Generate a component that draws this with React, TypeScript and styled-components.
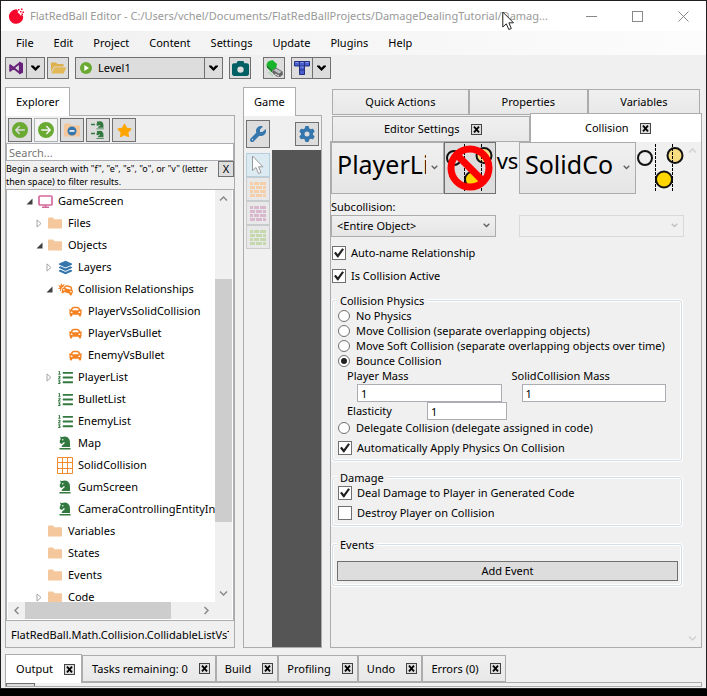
import React from "react";
import styled, { createGlobalStyle, css } from "styled-components";
import {
  FaWrench,
  FaGear,
  FaStar,
  FaLayerGroup,
  FaCircleArrowLeft,
  FaCircleArrowRight,
  FaCamera,
} from "react-icons/fa6";
import { FaCar, FaCarCrash, FaListOl } from "react-icons/fa";

const GlobalStyle = createGlobalStyle`
  *, *::before, *::after { box-sizing: border-box; }
  body { margin: 0; background: #000; }
  body, button, input, select {
    font-family: "Noto Sans", "Open Sans", sans-serif;
    font-size: 11px;
    line-height: 16px;
    color: #000;
  }
  button { padding: 0; margin: 0; }
`;

/* ---------- window frame ---------- */

const Screen = styled.div`
  height: 100vh;
  padding-bottom: 7px;
  background: #000;
`;

const AppWindow = styled.div`
  height: 100%;
  display: flex;
  flex-direction: column;
  background: #f0f0f0;
  border: 1px solid #231f20;
`;

const TitleBar = styled.header`
  flex: none;
  height: 30px;
  display: flex;
  align-items: center;
  background: #fff;
  padding-left: 7px;
`;

const TitleText = styled.h1`
  flex: 1;
  min-width: 0;
  margin: 0 0 0 5px;
  font-size: 11px;
  font-weight: 400;
  color: #999;
  white-space: nowrap;
  overflow: hidden;
  text-overflow: ellipsis;
`;

const CaptionButtons = styled.div`
  display: flex;
  height: 100%;
`;

const CaptionButton = styled.button`
  width: 46px;
  border: 0;
  background: none;
  display: flex;
  align-items: center;
  justify-content: center;
`;

const Pointer = styled.svg`
  position: absolute;
  left: 502px;
  top: 11px;
  z-index: 5;
`;

const MenuBar = styled.nav`
  flex: none;
  height: 24px;
  display: flex;
  align-items: center;
  padding-left: 5px;
  background: linear-gradient(90deg, #f0f0f0, #fcfcfc);
`;

const MenuItem = styled.button`
  border: 0;
  background: none;
  padding: 0 10px;
`;

/* ---------- toolbar ---------- */

const Toolbar = styled.div`
  flex: none;
  display: flex;
  padding: 2px 4px 0;
  height: 32px;
  align-items: flex-start;
`;

const ToolGroup = styled.div<{ $before?: number }>`
  display: flex;
  margin-left: ${(p) => p.$before ?? 0}px;
`;

const ToolButton = styled.button<{ $width?: number }>`
  height: 22px;
  width: ${(p) => p.$width ?? 22}px;
  border: 1px solid #707070;
  background: #ddd;
  display: flex;
  align-items: center;
  justify-content: center;
  & + & { border-left: 0; }
`;

const LevelButton = styled(ToolButton)`
  justify-content: flex-start;
  gap: 6px;
  padding-left: 4px;
`;

/* ---------- shared panels, tabs ---------- */

const Workspace = styled.main`
  flex: 1;
  min-height: 0;
  display: grid;
  grid-template-columns: 230px 79px minmax(0, 1fr);
  gap: 8px;
  padding: 0 4px;
`;

const Column = styled.section`
  display: flex;
  flex-direction: column;
  min-height: 0;
  min-width: 0;
`;

const PanelTab = styled.button`
  flex: none;
  align-self: flex-start;
  height: 29px;
  margin-bottom: -1px;
  padding: 0 10px;
  border: 1px solid #acacac;
  border-bottom: 0;
  background: #fff;
  z-index: 1;
`;

const PanelBody = styled.div`
  flex: 1;
  min-height: 0;
  display: flex;
  flex-direction: column;
  border: 1px solid #acacac;
`;

const Tab = styled.div<{ $active?: boolean; $grow?: number; $closable?: boolean }>`
  display: flex;
  align-items: center;
  justify-content: center;
  gap: 11px;
  height: 26px;
  padding-left: ${(p) => (p.$closable ? 4 : 0)}px;
  border: 1px solid #acacac;
  background: linear-gradient(#f0f0f0, #e8e8e8);
  ${(p) => p.$grow && css`flex: ${p.$grow} 1 0;`}
  ${(p) => p.$active && css`
    height: 29px;
    background: #fff;
    border-bottom: 0;
  `}
`;

const TabLabel = styled.button`
  border: 0;
  background: none;
  white-space: nowrap;
`;

const CloseButton = styled.button`
  width: 11px;
  height: 11px;
  border: 1px solid #444;
  background: #ddd;
  display: flex;
  align-items: center;
  justify-content: center;
`;

/* ---------- explorer ---------- */

const ExplorerTools = styled.div`
  display: flex;
  gap: 2px;
  padding: 2px 2px 1px;
`;

const SquareButton = styled.button<{ $faded?: boolean; $height?: number }>`
  width: 24px;
  height: ${(p) => p.$height ?? 24}px;
  display: flex;
  align-items: center;
  justify-content: center;
  border: 1px solid ${(p) => (p.$faded ? "#adb2b5" : "#707070")};
  background: ${(p) => (p.$faded ? "#f4f4f4" : "#ddd")};
`;

const SearchInput = styled.input`
  height: 18px;
  padding: 0 2px;
  border: 1px solid #abadb3;
  background: #fff;
  &::placeholder { color: #767676; opacity: 1; }
`;

const Hint = styled.div`
  display: flex;
  align-items: flex-start;
  height: 28px;
`;

const HintText = styled.p`
  flex: 1;
  min-width: 0;
  margin: 0;
  font-size: 9px;
  line-height: 13px;
  padding-top: 1px;
  white-space: nowrap;
`;

const HintClose = styled.button`
  flex: none;
  width: 16px;
  height: 16px;
  border: 1px solid #707070;
  background: #ddd;
  line-height: 14px;
`;

const TreeFrame = styled.div`
  flex: 1;
  min-height: 0;
  display: grid;
  grid-template: minmax(0, 1fr) 17px / minmax(0, 1fr) 17px;
  border: 1px solid #abadb3;
  background: #fff;
  padding: 0 1px 1px;
`;

const Tree = styled.ul`
  margin: 0;
  padding: 0;
  list-style: none;
  overflow: hidden;
`;

const TreeRow = styled.li<{ $depth: number }>`
  display: flex;
  align-items: center;
  height: 22px;
  padding-left: ${(p) => 13 + p.$depth * 10}px;
  white-space: nowrap;
`;

const Caret = styled.span`
  flex: none;
  width: 16px;
  height: 16px;
  display: flex;
  align-items: center;
  justify-content: center;
`;

const TreeIcon = styled.span`
  flex: none;
  width: 16px;
  margin-right: 5px;
  display: flex;
  justify-content: center;
`;

const Scroll = styled.div<{ $row?: boolean }>`
  display: flex;
  flex-direction: ${(p) => (p.$row ? "row" : "column")};
  background: #f0f0f0;
`;

const ScrollArrow = styled.button`
  width: 17px;
  height: 17px;
  flex: none;
  border: 0;
  background: none;
  display: flex;
  align-items: center;
  justify-content: center;
`;

const Track = styled.div<{ $part: number; $thumb?: boolean }>`
  flex: ${(p) => p.$part} 1 0;
  background: ${(p) => (p.$thumb ? "#cdcdcd" : "transparent")};
`;

const StatusLine = styled.div`
  flex: none;
  height: 26px;
  padding-top: 6px;
  margin: 0 5px;
  white-space: nowrap;
  overflow: hidden;
`;

/* ---------- game panel ---------- */

const GameBar = styled.div`
  display: flex;
  justify-content: space-between;
  align-items: center;
  padding: 4px 2px 2px;
`;

const GameArea = styled.div`
  flex: 1;
  min-height: 0;
  display: flex;
`;

const GameTools = styled.div`
  width: 28px;
  display: flex;
  flex-direction: column;
  padding: 3px 2px;
`;

const GhostTool = styled.button<{ $selected?: boolean }>`
  width: 24px;
  height: 24px;
  display: flex;
  align-items: center;
  justify-content: center;
  border: 1px solid ${(p) => (p.$selected ? "#b5cfdc" : "#c8cccf")};
  background: ${(p) => (p.$selected ? "#dcebf2" : "#e8e8e8")};
`;

const GameView = styled.div`
  flex: 1;
  background: #555;
`;

/* ---------- collision panel ---------- */

const TabRow = styled.div`
  display: flex;
  align-items: flex-end;
  margin: 2px 2px 0;
`;

const TabRowFront = styled(TabRow)`
  margin: -2px 0 -1px 2px;
  z-index: 1;
`;

const PropertyBody = styled.div`
  flex: 1;
  min-height: 0;
  display: flex;
  border: 1px solid #acacac;
`;

const Form = styled.form`
  flex: 1;
  min-width: 0;
  overflow: hidden;
`;

const PairGrid = styled.div`
  display: grid;
  grid-template-columns: minmax(0, 113fr) 52px 23px minmax(0, 117fr) 48px;
`;

const VersusText = styled.span`
  font-size: 22px;
  line-height: 36px;
  text-align: center;
`;

const ComboWrap = styled.div<{ $span?: boolean }>`
  position: relative;
  ${(p) => p.$span && css`grid-column: span 2;`}
`;

const Combo = styled.select<{ $big?: boolean; $endPadding: number }>`
  appearance: none;
  display: block;
  width: 100%;
  height: ${(p) => (p.$big ? 52 : 22)}px;
  padding: 0 ${(p) => p.$endPadding}px ${(p) => (p.$big ? 8 : 0)}px 5px;
  border: 1px solid #acacac;
  border-radius: 0;
  background: linear-gradient(#f0f0f0, #e5e5e5);
  font-size: ${(p) => (p.$big ? 25 : 11)}px;
  line-height: ${(p) => (p.$big ? 40 : 20)}px;
  color: #000;
  opacity: 1;
  text-overflow: clip;
  &:disabled { border-color: #d9d9d9; background: #f0f0f0; }
`;

const ComboArrow = styled.svg`
  position: absolute;
  right: 6px;
  top: 50%;
  margin-top: -3px;
  pointer-events: none;
`;

const PictureButton = styled.button`
  border: 1px solid #707070;
  background: #ddd;
  display: flex;
  align-items: center;
  justify-content: center;
`;

const SubLabel = styled.label`
  display: block;
  margin-top: 5px;
`;

const CheckLabel = styled.label`
  display: flex;
  align-items: center;
  gap: 5px;
  height: 16px;
  white-space: nowrap;
`;

const CheckStack = styled.div<{ $top?: number; $gap?: number }>`
  display: flex;
  flex-direction: column;
  gap: ${(p) => p.$gap ?? 4}px;
  margin-top: ${(p) => p.$top ?? 0}px;
`;

const TopChecks = styled(CheckStack)`
  padding-left: 1px;
`;

const CheckBox = styled.input`
  appearance: none;
  flex: none;
  width: 14px;
  height: 14px;
  margin: 0;
  display: grid;
  place-items: center;
  border: 1px solid #707070;
  background: #fff;
  &:checked::after {
    content: "";
    width: 10px;
    height: 10px;
    background: #212121;
    clip-path: polygon(0 50%, 18% 38%, 38% 62%, 82% 2%, 100% 12%, 42% 96%, 34% 96%);
  }
`;

const Radio = styled.input`
  appearance: none;
  flex: none;
  width: 12px;
  height: 12px;
  margin: 0 2px 0 0;
  display: grid;
  place-items: center;
  border: 1px solid #707070;
  border-radius: 50%;
  background: #fff;
  &:checked::after {
    content: "";
    width: 6px;
    height: 6px;
    border-radius: 50%;
    background: #212121;
  }
`;

const RadioLabel = styled(CheckLabel)`
  height: 15px;
  gap: 4px;
`;

const Group = styled.fieldset<{ $top: number }>`
  margin: ${(p) => p.$top}px 2px 0 1px;
  padding: 0 3px 4px 4px;
  min-width: 0;
  border: 1px solid #d5dfe5;
  border-radius: 3px;
  box-shadow: 0 0 0 1px #fff, inset 0 0 0 1px #fff;
`;

const Legend = styled.legend`
  padding: 0 3px;
  line-height: 15px;
  background: #f0f0f0;
`;

const GroupContent = styled.div`
  padding-left: 1px;
`;

const MassGrid = styled.div`
  display: grid;
  grid-template-columns: repeat(2, minmax(0, 1fr));
  margin: 0 2px 0 9px;
`;

const MassField = styled.label`
  display: flex;
  flex-direction: column;
  white-space: nowrap;
`;

const NumberBox = styled.input<{ $inset?: boolean }>`
  width: auto;
  min-width: 0;
  height: 18px;
  margin: ${(p) => (p.$inset ? "0 10px" : "0")};
  padding: 0 3px;
  border: 1px solid #abadb3;
  background: #fff;
`;

const ElasticityField = styled.label`
  display: grid;
  grid-template-columns: 80px 80px;
  align-items: center;
  margin-left: 9px;
`;

const WideButton = styled.button`
  display: block;
  width: 100%;
  height: 20px;
  margin-top: 9px;
  border: 1px solid #707070;
  background: #ddd;
  line-height: 18px;
`;

/* ---------- bottom dock ---------- */

const Dock = styled.footer`
  flex: none;
  padding: 6px 4px 1px;
`;

const DockTabs = styled.div`
  display: flex;
  align-items: flex-end;
`;

const DockTab = styled(Tab)<{ $width: number }>`
  width: ${(p) => p.$width}px;
  height: ${(p) => (p.$active ? 29 : 27)}px;
  margin-bottom: ${(p) => (p.$active ? -1 : 0)}px;
  z-index: ${(p) => (p.$active ? 1 : 0)};
`;

const DockBody = styled.div`
  height: 5px;
  border: 1px solid #acacac;
  overflow: hidden;
`;

const DockButton = styled.button`
  display: block;
  width: 29px;
  height: 16px;
  border: 1px solid #707070;
  background: #ddd;
`;

/* ---------- drawings ---------- */

const Chevron = ({ dir = "down", color = "#8a8a8a" }: { dir?: "up" | "down" | "left" | "right"; color?: string }) => {
  const turn = { down: 0, left: 90, up: 180, right: 270 }[dir];
  return (
    <svg width="11" height="11" viewBox="0 0 11 11" aria-hidden="true">
      <path d="M2 3.500 5.500 7 9 3.500" fill="none" stroke={color} strokeWidth="1.500" transform={`rotate(${turn} 5.5 5.5)`} />
    </svg>
  );
};

const DropGlyph = () => (
  <svg width="9" height="7" viewBox="0 0 9 7" aria-hidden="true">
    <path d="M0 0.5H2.500L4.500 2.800 6.500 0.500H9V1.500L4.500 6 0 1.500Z" fill="#000" />
  </svg>
);

const CloseX = () => (
  <svg width="7" height="7" viewBox="0 0 7 7" aria-hidden="true">
    <path d="M1 .7 6 6.300M6 .7 1 6.300" stroke="#000" strokeWidth="1.800" />
  </svg>
);

const Logo = () => (
  <svg width="17" height="17" viewBox="0 0 17 17" aria-hidden="true">
    <path d="M7 1.500a7.200 7.200 0 1 0 8.300 7.500l-1-2-2 .5-1-2-1.500-.5L10 3 8.500 1.300Z" fill="#f5082b" />
    <path d="M10 1h1.500v1.500H10zM13 .5h1.500V2H13zM12 3h1.500v1.500H12zM14.500 3.500H16V5h-1.500zM13.500 5.500H15V7h-1.500z" fill="#f5082b" />
  </svg>
);

const VisualStudio = () => (
  <svg width="15" height="14" viewBox="0 0 15 14" aria-hidden="true">
    <path d="M1.200 4.200 10.800 12V2L1.200 9.800Z" fill="none" stroke="#68217a" strokeWidth="1.900" strokeLinejoin="round" />
    <path d="M10 0.500 14 2.200V11.800L10 13.500Z" fill="#68217a" />
  </svg>
);

const OpenFolder = () => (
  <svg width="17" height="14" viewBox="0 0 17 14" aria-hidden="true">
    <path d="M1 11V2.500Q1 1.500 2 1.500H6L7.500 3H13.500V5.500H4Z" fill="#dcb04a" />
    <path d="M4.500 6.300H16.500L13.500 12.500H1.300Z" fill="#e3b857" />
  </svg>
);

const PlayDisc = () => (
  <svg width="12" height="12" viewBox="0 0 12 12" aria-hidden="true">
    <circle cx="6" cy="6" r="6" fill="#6aa932" />
    <path d="M4.300 3 9 6 4.300 9Z" fill="#fff" />
  </svg>
);

const Eraser = () => (
  <svg width="19" height="19" viewBox="0 0 19 19" aria-hidden="true">
    <path d="M1.500 5.500 3 2.500 7.500 1 12 5 11 10 7.500 11Z" fill="#18b52c" />
    <path d="M1.500 5.500 7.500 11V14L2 8.500Z" fill="#0d7f1c" />
    <path d="M4 11 6 12.500M3 13 8 17" stroke="#8ed698" strokeWidth="1" />
    <path d="M7.500 11 11 8.500 17.500 12.500 18 15.500 15 18 11.500 17.500 7.500 14Z" fill="#666" />
    <path d="M8.500 11.300 11 9.500 16.500 12.800 14 14.800Z" fill="#bfc3c3" />
    <path d="M10 15 14 17" stroke="#e5e5e5" />
  </svg>
);

const BlockT = () => (
  <svg width="16" height="14" viewBox="0 0 16 14" aria-hidden="true">
    <path d="M.5.5H15.500V5H10.500V13.500H5.500V5H.5Z" fill="#4a5fd0" stroke="#25307c" />
    <path d="M5.500 1V5M10.500 1V5M5.500 5H10.500M5.500 9H10.500" stroke="#25307c" />
    <path d="M1.500 1.500H4.500M6.500 1.500H9.500M11.500 1.500H14.500M6.500 6H9.500" stroke="#8794ea" />
  </svg>
);

const Folder = () => (
  <svg width="14" height="12" viewBox="0 0 14 12" aria-hidden="true">
    <path d="M0 1.500Q0 .5 1 .5H5L6.500 2.200H13Q14 2.200 14 3.200V11Q14 11.500 13.500 11.500H.5Q0 11.500 0 11Z" fill="#f4c89c" />
  </svg>
);

const FolderMinus = () => (
  <svg width="16" height="14" viewBox="0 0 16 14" aria-hidden="true">
    <path d="M0 1.500Q0 .5 1 .5H6L7.500 2.500H15Q16 2.500 16 3.500V13Q16 13.500 15.500 13.500H.5Q0 13.500 0 13Z" fill="#f4c89c" />
    <circle cx="8" cy="8" r="4.500" fill="#3576ac" />
    <path d="M5.500 8H10.500" stroke="#fff" strokeWidth="1.600" />
  </svg>
);

const knightPath =
  "M1 .5 2.500 1 6 .5Q11 1 11 7V11H2.500Q2.500 9 5.500 7.500L5.500 6 4 6.800 3 8 .8 7 .8 4.500 1.800 3ZM.5 12H11.500V13.500H.5Z";

const KnightList = () => (
  <svg width="16" height="20" viewBox="0 0 16 20" aria-hidden="true">
    <path d="M1 4.500H5M1 13.500H5" stroke="#33783f" strokeWidth="1.400" />
    <g fill="#33783f">
      <path d={knightPath} transform="translate(6 1) scale(.68 .62)" />
      <path d={knightPath} transform="translate(6 10.500) scale(.68 .62)" />
    </g>
  </svg>
);

const Monitor = () => (
  <svg width="15" height="13" viewBox="0 0 15 13" aria-hidden="true">
    <rect x="1" y="1" width="13" height="9" rx="1" fill="none" stroke="#d3699a" strokeWidth="1.700" />
    <path d="M7.500 10V12M4 12.300H11" stroke="#d3699a" strokeWidth="1.500" />
  </svg>
);

const GridIcon = () => (
  <svg width="16" height="17" viewBox="0 0 16 17" aria-hidden="true">
    <path d="M.5.5H15.500V16.500H.5ZM5.500.5V16.500M10.500.5V16.500M.5 5.500H15.500M.5 11.500H15.500" fill="none" stroke="#f28a2e" />
  </svg>
);

const KnightIcon = () => (
  <svg width="12" height="14" viewBox="0 0 12 14" aria-hidden="true">
    <path d={knightPath} fill="#33783f" />
    <circle cx="3.800" cy="3.800" r=".7" fill="#fff" />
  </svg>
);

const Bricks = ({ color }: { color: string }) => (
  <svg width="16" height="15" viewBox="0 0 16 15" aria-hidden="true">
    <path
      d="M0 0H3V3H0ZM4 0H9V3H4ZM10 0H16V3H10ZM0 4H5V7H0ZM6 4H12V7H6ZM13 4H16V7H13ZM0 8H3V11H0ZM4 8H9V11H4ZM10 8H16V11H10ZM0 12H5V15H0ZM6 12H12V15H6ZM13 12H16V15H13Z"
      fill={color}
    />
  </svg>
);

const ArrowCursor = () => (
  <svg width="14" height="20" viewBox="0 0 14 20" aria-hidden="true">
    <path d="M1.500 1V15.500L5 12.500 7.500 18.500 10 17.500 7.500 11.800H12Z" fill="#fff" stroke="#999" />
  </svg>
);

const BallsScene = () => (
  <>
    <circle cx="9" cy="16" r="7" fill="none" stroke="#111" strokeWidth="2" />
    <circle cx="39" cy="13.500" r="7.500" fill="#f8dc80" stroke="#111" strokeWidth="2" />
    <circle cx="28" cy="37.500" r="8" fill="#ffd500" stroke="#111" strokeWidth="2" />
    <path d="M19.500 2V50M36.500 2V50" stroke="#000" strokeDasharray="3 1" />
  </>
);

const Balls = () => (
  <svg width="48" height="52" viewBox="0 0 48 52" role="img" aria-label="Moves on collision">
    <BallsScene />
  </svg>
);

const BallsForbidden = () => (
  <svg width="50" height="50" viewBox="0 1 50 50" aria-hidden="true">
    <BallsScene />
    <circle cx="25" cy="26" r="19" fill="none" stroke="#f00" strokeWidth="7" />
    <path d="M12 13 38 39" stroke="#f00" strokeWidth="7" />
  </svg>
);

/* ---------- data ---------- */

type IconName = "screen" | "folder" | "layers" | "crash" | "car" | "list" | "knight" | "grid";
type Node = { text: string; depth: number; icon: IconName; state?: "open" | "closed" };

const nodes: Node[] = [
  { text: "GameScreen", depth: 0, icon: "screen", state: "open" },
  { text: "Files", depth: 1, icon: "folder", state: "closed" },
  { text: "Objects", depth: 1, icon: "folder", state: "open" },
  { text: "Layers", depth: 2, icon: "layers", state: "closed" },
  { text: "Collision Relationships", depth: 2, icon: "crash", state: "open" },
  { text: "PlayerVsSolidCollision", depth: 3, icon: "car" },
  { text: "PlayerVsBullet", depth: 3, icon: "car" },
  { text: "EnemyVsBullet", depth: 3, icon: "car" },
  { text: "PlayerList", depth: 2, icon: "list", state: "closed" },
  { text: "BulletList", depth: 2, icon: "list" },
  { text: "EnemyList", depth: 2, icon: "list" },
  { text: "Map", depth: 2, icon: "knight" },
  { text: "SolidCollision", depth: 2, icon: "grid" },
  { text: "GumScreen", depth: 2, icon: "knight" },
  { text: "CameraControllingEntityInstance", depth: 2, icon: "knight" },
  { text: "Variables", depth: 1, icon: "folder" },
  { text: "States", depth: 1, icon: "folder" },
  { text: "Events", depth: 1, icon: "folder" },
  { text: "Code", depth: 1, icon: "folder", state: "closed" },
];

const icons: Record<IconName, React.ReactNode> = {
  screen: <Monitor />,
  folder: <Folder />,
  layers: <FaLayerGroup size={15} color="#3576ac" />,
  crash: <FaCarCrash size={15} color="#f58220" />,
  car: <FaCar size={13} color="#f58220" />,
  list: <FaListOl size={15} color="#33783f" />,
  knight: <KnightIcon />,
  grid: <GridIcon />,
};

const menus = ["File", "Edit", "Project", "Content", "Settings", "Update", "Plugins", "Help"];

const dockTabs = [
  { text: "Output", width: 77, active: true },
  { text: "Tasks remaining: 0", width: 134 },
  { text: "Build", width: 62 },
  { text: "Profiling", width: 80 },
  { text: "Undo", width: 64 },
  { text: "Errors (0)", width: 84 },
];

const physics = [
  "No Physics",
  "Move Collision (separate overlapping objects)",
  "Move Soft Collision (separate overlapping objects over time)",
  "Bounce Collision",
];

/* ---------- parts ---------- */

const Close = ({ name }: { name: string }) => (
  <CloseButton type="button" aria-label={`Close ${name}`}>
    <CloseX />
  </CloseButton>
);

const Check = ({ text, on }: { text: string; on?: boolean }) => (
  <CheckLabel>
    <CheckBox type="checkbox" defaultChecked={on} />
    {text}
  </CheckLabel>
);

const PhysicsRadio = ({ text, on }: { text: string; on?: boolean }) => (
  <RadioLabel>
    <Radio type="radio" name="physics" defaultChecked={on} />
    {text}
  </RadioLabel>
);

type ComboProps = {
  id: string;
  label?: string;
  value: string;
  big?: boolean;
  disabled?: boolean;
  endPadding?: number;
};

const ComboBox = ({ id, label, value, big, disabled, endPadding = 22 }: ComboProps) => (
  <ComboWrap $span={!big}>
    <Combo id={id} aria-label={label} $big={big} $endPadding={endPadding} disabled={disabled}>
      <option>{value}</option>
    </Combo>
    <ComboArrow width="7" height="5" viewBox="0 0 7 5" aria-hidden="true">
      <path d="M.7.7 3.500 3.500 6.300.7" fill="none" stroke={disabled ? "#bfbfbf" : "#606060"} strokeWidth="1.300" />
    </ComboArrow>
  </ComboWrap>
);

const TreeCaret = ({ state }: { state?: "open" | "closed" }) => (
  <Caret>
    {state === "open" && (
      <svg width="7" height="7" viewBox="0 0 7 7" aria-hidden="true">
        <path d="M6.500.5V6.500H.5Z" fill="#404040" />
      </svg>
    )}
    {state === "closed" && (
      <svg width="6" height="9" viewBox="0 0 6 9" aria-hidden="true">
        <path d="M1 .9V8.100L5 4.500Z" fill="#fff" stroke="#a6a6a6" />
      </svg>
    )}
  </Caret>
);

const Explorer = () => (
  <Column>
    <PanelTab>Explorer</PanelTab>
    <PanelBody>
      <ExplorerTools>
        <SquareButton aria-label="Back"><FaCircleArrowLeft size={16} color="#6aa932" /></SquareButton>
        <SquareButton aria-label="Forward" $faded><FaCircleArrowRight size={16} color="#6aa932" /></SquareButton>
        <SquareButton aria-label="Collapse folders"><FolderMinus /></SquareButton>
        <SquareButton aria-label="Collapse entities"><KnightList /></SquareButton>
        <SquareButton aria-label="Bookmarks"><FaStar size={15} color="#ffa500" /></SquareButton>
      </ExplorerTools>
      <SearchInput placeholder="Search..." aria-label="Search" />
      <Hint>
        <HintText>
          Begin a search with "f", "e", "s", "o", or "v" (letter
          <br />
          then space) to filter results.
        </HintText>
        <HintClose aria-label="Hide hint">X</HintClose>
      </Hint>
      <TreeFrame>
        <Tree role="tree">
          {nodes.map((n) => (
            <TreeRow key={n.text} role="treeitem" aria-level={n.depth + 1} $depth={n.depth}>
              <TreeCaret state={n.state} />
              <TreeIcon>{icons[n.icon]}</TreeIcon>
              {n.text}
            </TreeRow>
          ))}
        </Tree>
        <Scroll>
          <ScrollArrow aria-label="Scroll up"><Chevron dir="up" /></ScrollArrow>
          <Track $part={72} />
          <Track $part={243} $thumb />
          <Track $part={63} />
          <ScrollArrow aria-label="Scroll down"><Chevron /></ScrollArrow>
        </Scroll>
        <Scroll $row>
          <ScrollArrow aria-label="Scroll left"><Chevron dir="left" /></ScrollArrow>
          <Track $part={146} $thumb />
          <Track $part={27} />
          <ScrollArrow aria-label="Scroll right"><Chevron dir="right" /></ScrollArrow>
        </Scroll>
        <Scroll />
      </TreeFrame>
      <StatusLine>FlatRedBall.Math.Collision.CollidableListVsTileShapeCollection</StatusLine>
    </PanelBody>
  </Column>
);

const Game = () => (
  <Column>
    <PanelTab>Game</PanelTab>
    <PanelBody>
      <GameBar>
        <SquareButton aria-label="Edit mode" $height={28}><FaWrench size={16} color="#3576ac" /></SquareButton>
        <SquareButton aria-label="Settings"><FaGear size={16} color="#3576ac" /></SquareButton>
      </GameBar>
      <GameArea>
        <GameTools>
          <GhostTool aria-label="Select" $selected><ArrowCursor /></GhostTool>
          <GhostTool aria-label="Orange bricks"><Bricks color="#f6cfa9" /></GhostTool>
          <GhostTool aria-label="Pink bricks"><Bricks color="#d9b8cd" /></GhostTool>
          <GhostTool aria-label="Green bricks"><Bricks color="#c5d8ae" /></GhostTool>
        </GameTools>
        <GameView />
      </GameArea>
    </PanelBody>
  </Column>
);

const CollisionPanel = () => (
  <Column>
    <TabRow>
      <Tab $grow={137}><TabLabel>Quick Actions</TabLabel></Tab>
      <Tab $grow={119}><TabLabel>Properties</TabLabel></Tab>
      <Tab $grow={112}><TabLabel>Variables</TabLabel></Tab>
    </TabRow>
    <TabRowFront>
      <Tab $grow={198} $closable><TabLabel>Editor Settings</TabLabel><Close name="Editor Settings" /></Tab>
      <Tab $grow={172} $closable $active><TabLabel>Collision</TabLabel><Close name="Collision" /></Tab>
    </TabRowFront>
    <PropertyBody>
      <Form onSubmit={(e) => e.preventDefault()}>
        <PairGrid>
          <ComboBox id="first" label="First object" value="PlayerList" big endPadding={17} />
          <PictureButton type="button" aria-label="First object does not move"><BallsForbidden /></PictureButton>
          <VersusText>vs</VersusText>
          <ComboBox id="second" label="Second object" value="SolidCollision" big />
          <Balls />
        </PairGrid>
        <SubLabel htmlFor="sub">Subcollision:</SubLabel>
        <PairGrid>
          <ComboBox id="sub" value="<Entire Object>" />
          <span />
          <ComboBox id="sub-second" label="Second subcollision" value="" disabled />
        </PairGrid>
        <TopChecks $top={8} $gap={7}>
          <Check text="Auto-name Relationship" on />
          <Check text="Is Collision Active" on />
        </TopChecks>
        <Group $top={9}>
          <Legend>Collision Physics</Legend>
          <GroupContent>
            {physics.map((p) => (
              <PhysicsRadio key={p} text={p} on={p === "Bounce Collision"} />
            ))}
            <MassGrid>
              <MassField>Player Mass<NumberBox $inset defaultValue="1" /></MassField>
              <MassField>SolidCollision Mass<NumberBox $inset defaultValue="1" /></MassField>
            </MassGrid>
            <ElasticityField>Elasticity<NumberBox defaultValue="1" /></ElasticityField>
            <PhysicsRadio text="Delegate Collision (delegate assigned in code)" />
            <CheckStack $top={5}>
              <Check text="Automatically Apply Physics On Collision" on />
            </CheckStack>
          </GroupContent>
        </Group>
        <Group $top={9}>
          <Legend>Damage</Legend>
          <GroupContent>
            <CheckStack>
              <Check text="Deal Damage to Player in Generated Code" on />
              <Check text="Destroy Player on Collision" />
            </CheckStack>
          </GroupContent>
        </Group>
        <Group $top={11}>
          <Legend>Events</Legend>
          <WideButton type="button">Add Event</WideButton>
        </Group>
      </Form>
      <Scroll>
        <ScrollArrow aria-label="Scroll up" disabled><Chevron dir="up" color="#d0d0d0" /></ScrollArrow>
        <Track $part={1} />
        <ScrollArrow aria-label="Scroll down" disabled><Chevron color="#d0d0d0" /></ScrollArrow>
      </Scroll>
    </PropertyBody>
  </Column>
);

export default function App() {
  return (
    <Screen>
      <GlobalStyle />
      <AppWindow>
        <TitleBar>
          <Logo />
          <TitleText>FlatRedBall Editor - C:/Users/vchel/Documents/FlatRedBallProjects/DamageDealingTutorial/Damag...</TitleText>
          <CaptionButtons>
            <CaptionButton aria-label="Minimize">
              <svg width="11" height="11" aria-hidden="true"><path d="M0 5.500H11" stroke="#888" /></svg>
            </CaptionButton>
            <CaptionButton aria-label="Maximize">
              <svg width="11" height="11" aria-hidden="true"><rect x=".5" y=".5" width="10" height="10" fill="none" stroke="#888" /></svg>
            </CaptionButton>
            <CaptionButton aria-label="Close">
              <svg width="11" height="11" aria-hidden="true"><path d="M.5.5 10.500 10.500M10.500.5.5 10.500" stroke="#888" /></svg>
            </CaptionButton>
          </CaptionButtons>
          <Pointer width="13" height="20" viewBox="0 0 13 20" aria-hidden="true">
            <path d="M.8 1V16L4.300 12.800 6.800 18.500 9.300 17.500 6.900 11.800H11.500Z" fill="#fff" stroke="#222" />
          </Pointer>
        </TitleBar>
        <MenuBar>
          {menus.map((m) => (
            <MenuItem key={m}>{m}</MenuItem>
          ))}
        </MenuBar>
        <Toolbar>
          <ToolGroup>
            <ToolButton aria-label="Open in Visual Studio"><VisualStudio /></ToolButton>
            <ToolButton aria-label="Visual Studio options" $width={18}><DropGlyph /></ToolButton>
          </ToolGroup>
          <ToolGroup $before={2}>
            <ToolButton aria-label="Open folder"><OpenFolder /></ToolButton>
          </ToolGroup>
          <ToolGroup $before={6}>
            <LevelButton $width={130}><PlayDisc />Level1</LevelButton>
            <ToolButton aria-label="Choose level" $width={18}><DropGlyph /></ToolButton>
          </ToolGroup>
          <ToolGroup $before={6}>
            <ToolButton aria-label="Camera settings"><FaCamera size={17} color="#006064" /></ToolButton>
          </ToolGroup>
          <ToolGroup $before={12}>
            <ToolButton aria-label="Clean"><Eraser /></ToolButton>
          </ToolGroup>
          <ToolGroup $before={6}>
            <ToolButton aria-label="Tiled"><BlockT /></ToolButton>
            <ToolButton aria-label="Tiled options" $width={18}><DropGlyph /></ToolButton>
          </ToolGroup>
        </Toolbar>
        <Workspace>
          <Explorer />
          <Game />
          <CollisionPanel />
        </Workspace>
        <Dock>
          <DockTabs>
            {dockTabs.map((t) => (
              <DockTab key={t.text} $width={t.width} $active={t.active} $closable>
                <TabLabel>{t.text}</TabLabel>
                <Close name={t.text} />
              </DockTab>
            ))}
          </DockTabs>
          <DockBody>
            <DockButton aria-label="Output action" />
          </DockBody>
        </Dock>
      </AppWindow>
    </Screen>
  );
}
